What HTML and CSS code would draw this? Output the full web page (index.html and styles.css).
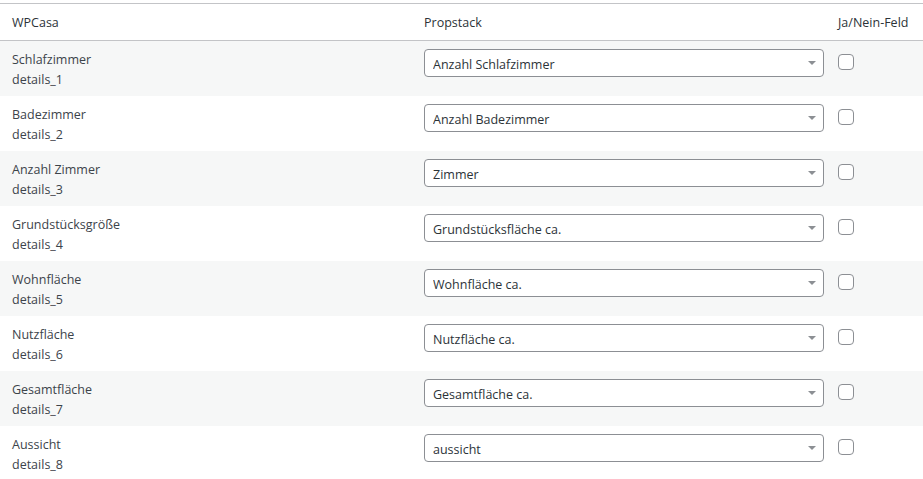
FILE: index.html
```html
<!DOCTYPE html>
<html lang="de">
<head>
    <meta charset="UTF-8">
    <meta name="viewport" content="width=device-width, initial-scale=1.0">
    <title>Feldzuordnung</title>
    <link rel="stylesheet" href="styles.css">
</head>
<body>
    <div class="mapping">
        <!-- Table head -->
        <div class="row head">
            <div class="cell">WPCasa</div>
            <div class="cell">Propstack</div>
            <div class="cell">Ja/Nein-Feld</div>
        </div>

        <div class="row alt">
            <div class="cell name">Schlafzimmer<br>details_1</div>
            <div class="cell"><span class="select-wrap"><select><option>Anzahl Schlafzimmer</option></select><svg class="arrow" width="8" height="4" viewBox="0 0 8 4"><path d="M0 0h8L4 4z"/></svg></span></div>
            <div class="cell"><input type="checkbox" class="check"></div>
        </div>
        <div class="row">
            <div class="cell name">Badezimmer<br>details_2</div>
            <div class="cell"><span class="select-wrap"><select><option>Anzahl Badezimmer</option></select><svg class="arrow" width="8" height="4" viewBox="0 0 8 4"><path d="M0 0h8L4 4z"/></svg></span></div>
            <div class="cell"><input type="checkbox" class="check"></div>
        </div>
        <div class="row alt">
            <div class="cell name">Anzahl Zimmer<br>details_3</div>
            <div class="cell"><span class="select-wrap"><select><option>Zimmer</option></select><svg class="arrow" width="8" height="4" viewBox="0 0 8 4"><path d="M0 0h8L4 4z"/></svg></span></div>
            <div class="cell"><input type="checkbox" class="check"></div>
        </div>
        <div class="row">
            <div class="cell name">Grundstücksgröße<br>details_4</div>
            <div class="cell"><span class="select-wrap"><select><option>Grundstücksfläche ca.</option></select><svg class="arrow" width="8" height="4" viewBox="0 0 8 4"><path d="M0 0h8L4 4z"/></svg></span></div>
            <div class="cell"><input type="checkbox" class="check"></div>
        </div>
        <div class="row alt">
            <div class="cell name">Wohnfläche<br>details_5</div>
            <div class="cell"><span class="select-wrap"><select><option>Wohnfläche ca.</option></select><svg class="arrow" width="8" height="4" viewBox="0 0 8 4"><path d="M0 0h8L4 4z"/></svg></span></div>
            <div class="cell"><input type="checkbox" class="check"></div>
        </div>
        <div class="row">
            <div class="cell name">Nutzfläche<br>details_6</div>
            <div class="cell"><span class="select-wrap"><select><option>Nutzfläche ca.</option></select><svg class="arrow" width="8" height="4" viewBox="0 0 8 4"><path d="M0 0h8L4 4z"/></svg></span></div>
            <div class="cell"><input type="checkbox" class="check"></div>
        </div>
        <div class="row alt">
            <div class="cell name">Gesamtfläche<br>details_7</div>
            <div class="cell"><span class="select-wrap"><select><option>Gesamtfläche ca.</option></select><svg class="arrow" width="8" height="4" viewBox="0 0 8 4"><path d="M0 0h8L4 4z"/></svg></span></div>
            <div class="cell"><input type="checkbox" class="check"></div>
        </div>
        <div class="row">
            <div class="cell name">Aussicht<br>details_8</div>
            <div class="cell"><span class="select-wrap"><select><option>aussicht</option></select><svg class="arrow" width="8" height="4" viewBox="0 0 8 4"><path d="M0 0h8L4 4z"/></svg></span></div>
            <div class="cell"><input type="checkbox" class="check"></div>
        </div>
    </div>
</body>
</html>
```

FILE: styles.css
```css
body {
    margin: 0;
    padding-top: 3px;
    background: #fff;
    font-family: "Open Sans", "Noto Sans", sans-serif;
    font-size: 12.5px;
    line-height: 20px;
    color: #3c434a;
}
.mapping {
    border-top: 1px solid #c3c4c7;
}
.row {
    display: grid;
    grid-template-columns: 412px 414px 1fr;
    padding: 8px 12px 0;
    height: 55px;
    box-sizing: border-box;
}
.row.alt {
    background: #f6f7f7;
}
.head {
    height: 37px;
    padding-top: 9px;
    border-bottom: 1px solid #c3c4c7;
    color: #2c3338;
}
.name {
    padding-top: 1px;
}
.select-wrap {
    position: relative;
    display: block;
    width: 400px;
}
select {
    display: block;
    width: 100%;
    height: 28px;
    padding: 3px 24px 0 8px;
    font-family: inherit;
    font-size: 12.5px;
    color: #2c3338;
    background: #fff;
    border: 1px solid #8c8f94;
    border-radius: 4px;
    appearance: none;
    -webkit-appearance: none;
}
.arrow {
    position: absolute;
    right: 8px;
    top: 12px;
    fill: #8c8f94;
}
.check {
    appearance: none;
    -webkit-appearance: none;
    display: block;
    width: 16px;
    height: 16px;
    margin: 5px 0 0;
    background: #fff;
    border: 1px solid #8c8f94;
    border-radius: 4px;
}
```
